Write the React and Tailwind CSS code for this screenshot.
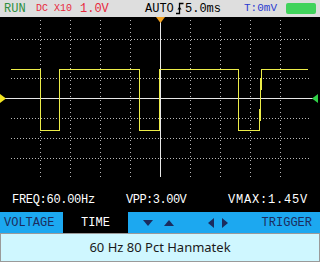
import React from "react";

const mono = { fontFamily: '"Liberation Mono", "DejaVu Sans Mono", monospace' };

const cols = [40, 70, 100, 130, 190, 220, 250, 280];
const rows = [22, 61, 101, 121, 141];

const TopBar = () => {
    return (
        <div className="h-[17px] bg-[#dedede] flex items-center text-[12px] leading-none" style={mono}>
            <span className="ml-[4px] w-[32px] shrink-0 text-[#2f8f3f]">RUN</span>
            <span className="w-[44px] shrink-0 text-[10px] text-[#e8283c]">DC X10</span>
            <span className="w-[65px] shrink-0 text-[#e8283c]">1.0V</span>
            <span className="w-[31px] shrink-0 text-black">AUTO</span>
            <svg width="8" height="13" viewBox="0 0 8 13" className="shrink-0 mr-[1px]">
                <path d="M0 11.5 H3.5 V1.5 H7.5" stroke="#000" strokeWidth="1.3" fill="none" />
                <path d="M1.5 7.5 L3.5 4.5 L5.5 7.5 Z" fill="#000" />
            </svg>
            <span className="w-[59px] shrink-0 text-black">5.0ms</span>
            <span className="w-[42px] shrink-0 text-[11px] text-[#2b3bd0]">T:0mV</span>
            <div className="w-[30px] h-[11px] shrink-0 rounded-[2px] bg-[#41d35c]"></div>
        </div>
    )
}

const Scope = () => {
    return (
        <svg width="320" height="168" viewBox="0 0 320 168" className="block" shapeRendering="crispEdges">
            {
                rows.map((y, i) => (
                    <line key={"r" + i} x1="11" x2="309" y1={y + 0.5} y2={y + 0.5} stroke="#b8b8b8" strokeDasharray="1 2" />
                ))
            }
            {
                cols.map((x, i) => (
                    <line key={"c" + i} x1={x + 0.5} x2={x + 0.5} y1="3" y2="160" stroke="#b8b8b8" strokeDasharray="1 3" />
                ))
            }
            {/* center cross */}
            <line x1="160.5" x2="160.5" y1="0" y2="160" stroke="#e8e8e8" />
            <line x1="5" x2="313" y1="81.5" y2="81.5" stroke="#e8e8e8" />

            {/* trace */}
            <path d="M11 52.5 H40.5 V113.5 H59.5 V52.5 H139.5 V113.5 H159.5 V52.5 H238.5 V113.5 H259.5 L261.5 52.5 H308" stroke="#ecec48" strokeWidth="1.4" fill="none" />

            {/* markers */}
            <path d="M156 0 H165 L160.5 6 Z" fill="#f0a020" shapeRendering="auto" />
            <path d="M0 77 L6 81.5 L0 86 Z" fill="#f2e422" shapeRendering="auto" />
            <path d="M318 77 L312 81.5 L318 86 Z" fill="#2fd046" shapeRendering="auto" />
        </svg>
    )
}

const Readings = () => {
    return (
        <div className="h-[27px] flex items-center text-white text-[12px] leading-none pl-[12px] pt-[3px]" style={mono}>
            <span className="w-[114px] shrink-0 tracking-[-0.3px]">FREQ:60.00Hz</span>
            <span className="w-[102px] shrink-0 tracking-[-0.5px]">VPP:3.00V</span>
            <span className="tracking-[0.8px]">VMAX:1.45V</span>
        </div>
    )
}

const Tri = ({ d }) => (
    <svg width="10" height="8" viewBox="0 0 10 8">
        <path d={d} fill="#1b2c5e" />
    </svg>
)

const BottomBar = () => {
    return (
        <div className="h-[21px] flex items-stretch bg-[#1ca8f0] text-[12px] leading-none text-[#1b2c5e]" style={mono}>
            <div className="w-[63px] pl-[4px] flex items-center">VOLTAGE</div>
            <div className="w-[65px] bg-black text-white flex items-center justify-center">TIME</div>
            <div className="flex items-center pl-[15px] gap-[11px]">
                <Tri d="M0 1 H10 L5 7 Z" />
                <Tri d="M0 7 H10 L5 1 Z" />
            </div>
            <div className="flex items-center pl-[34px] gap-[8px]">
                <svg width="6" height="10" viewBox="0 0 6 10"><path d="M6 0 V10 L0 5 Z" fill="#1b2c5e" /></svg>
                <svg width="6" height="10" viewBox="0 0 6 10"><path d="M0 0 V10 L6 5 Z" fill="#1b2c5e" /></svg>
            </div>
            <div className="flex items-center ml-auto pr-[8px]">TRIGGER</div>
        </div>
    )
}

export default function App() {
    return (
        <div className="w-[320px] h-[269px] bg-white overflow-hidden">
            <TopBar />
            <div className="bg-black">
                <Scope />
                <Readings />
            </div>
            <BottomBar />
            <div className="h-[29px] border border-[#9a9a9a] bg-[#cff7ff] flex items-center justify-center text-[13px] text-[#1a1a1a]" style={{ fontFamily: '"Noto Sans", "Open Sans", sans-serif' }}>
                60 Hz 80 Pct Hanmatek
            </div>
        </div>
    )
}
